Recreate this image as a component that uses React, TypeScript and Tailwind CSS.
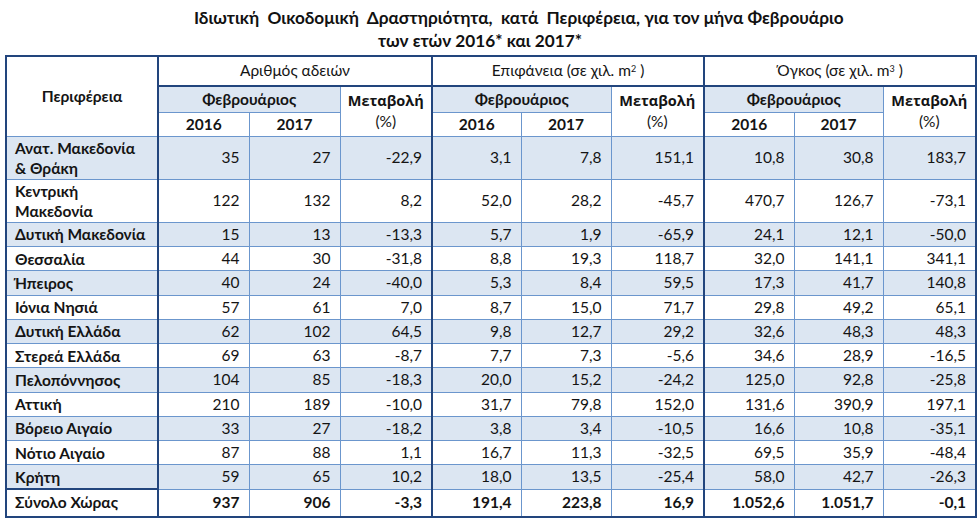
import type { ReactNode } from "react"

const rows: string[][] = [
  ["Ανατ. Μακεδονία|& Θράκη", "35", "27", "-22,9", "3,1", "7,8", "151,1", "10,8", "30,8", "183,7"],
  ["Κεντρική|Μακεδονία", "122", "132", "8,2", "52,0", "28,2", "-45,7", "470,7", "126,7", "-73,1"],
  ["Δυτική Μακεδονία", "15", "13", "-13,3", "5,7", "1,9", "-65,9", "24,1", "12,1", "-50,0"],
  ["Θεσσαλία", "44", "30", "-31,8", "8,8", "19,3", "118,7", "32,0", "141,1", "341,1"],
  ["Ήπειρος", "40", "24", "-40,0", "5,3", "8,4", "59,5", "17,3", "41,7", "140,8"],
  ["Ιόνια Νησιά", "57", "61", "7,0", "8,7", "15,0", "71,7", "29,8", "49,2", "65,1"],
  ["Δυτική Ελλάδα", "62", "102", "64,5", "9,8", "12,7", "29,2", "32,6", "48,3", "48,3"],
  ["Στερεά Ελλάδα", "69", "63", "-8,7", "7,7", "7,3", "-5,6", "34,6", "28,9", "-16,5"],
  ["Πελοπόννησος", "104", "85", "-18,3", "20,0", "15,2", "-24,2", "125,0", "92,8", "-25,8"],
  ["Αττική", "210", "189", "-10,0", "31,7", "79,8", "152,0", "131,6", "390,9", "197,1"],
  ["Βόρειο Αιγαίο", "33", "27", "-18,2", "3,8", "3,4", "-10,5", "16,6", "10,8", "-35,1"],
  ["Νότιο Αιγαίο", "87", "88", "1,1", "16,7", "11,3", "-32,5", "69,5", "35,9", "-48,4"],
  ["Κρήτη", "59", "65", "10,2", "18,0", "13,5", "-25,4", "58,0", "42,7", "-26,3"],
]

const total = ["Σύνολο Χώρας", "937", "906", "-3,3", "191,4", "223,8", "16,9", "1.052,6", "1.051,7", "-0,1"]

// columns that start a group get the heavy left rule
const groupStart = [1, 4, 7]

function Num({ i, children, bold }: { i: number; children: ReactNode; bold?: boolean }) {
  return (
    <td
      className={
        "border border-[#6b96cd] pr-[9px] text-right align-middle " +
        (groupStart.includes(i) ? "border-l-2 border-l-[#22457d] " : "") +
        (bold ? "font-bold" : "")
      }
    >
      {children}
    </td>
  )
}

function Change() {
  return (
    <th rowSpan={2} className="border border-[#6b96cd] bg-white text-center align-middle leading-[21px]">
      <span className="font-['Open_Sans'] text-[14.5px] font-bold">Μεταβολή</span>
      <br />
      <span className="font-normal">(%)</span>
    </th>
  )
}

function Group({ children }: { children: ReactNode }) {
  return (
    <th
      colSpan={3}
      className="h-[30px] border border-l-2 border-b-2 border-[#6b96cd] border-l-[#22457d] border-b-[#22457d] bg-white text-center font-normal"
    >
      {children}
    </th>
  )
}

function Month() {
  return (
    <th colSpan={2} className="border border-l-2 border-[#6b96cd] border-l-[#22457d] bg-[#dce6f2] font-bold">
      Φεβρουάριος
    </th>
  )
}

export default function App() {
  return (
    <div className="h-[521px] w-[980px] overflow-hidden bg-white font-['Lato','Open_Sans',sans-serif] text-[15.5px] text-[#141414]">
      <div className="pt-[6px] text-[17.2px] font-bold leading-[23px] text-[#111]">
        <div className="pl-[194px]">
          Ιδιωτική&nbsp; Οικοδομική&nbsp; Δραστηριότητα,&nbsp; κατά&nbsp; Περιφέρεια, για τον μήνα Φεβρουάριο
        </div>
        <div className="pl-[378px]">των ετών 2016* και 2017*</div>
      </div>

      <table className="ml-[5px] mt-[3px] w-[970px] table-fixed border-collapse border-2 border-[#22457d]">
        <colgroup>
          <col className="w-[152px]" />
          <col className="w-[91px]" />
          <col className="w-[91px]" />
          <col className="w-[92px]" />
          <col className="w-[89px]" />
          <col className="w-[90px]" />
          <col className="w-[93px]" />
          <col className="w-[90px]" />
          <col className="w-[89px]" />
          <col className="w-[93px]" />
        </colgroup>
        <thead>
          <tr>
            <th rowSpan={3} className="border border-[#6b96cd] bg-white text-center font-bold">
              Περιφέρεια
            </th>
            <Group>Αριθμός αδειών</Group>
            <Group>
              Επιφάνεια (σε χιλ. m<sup className="text-[9px]">2</sup> )
            </Group>
            <Group>
              Όγκος (σε χιλ. m<sup className="text-[9px]">3</sup> )
            </Group>
          </tr>
          <tr className="h-[26px]">
            <Month />
            <Change />
            <Month />
            <Change />
            <Month />
            <Change />
          </tr>
          <tr className="h-[24px]">
            <th className="border border-l-2 border-[#6b96cd] border-l-[#22457d] font-bold">2016</th>
            <th className="border border-[#6b96cd] font-bold">2017</th>
            <th className="border border-l-2 border-[#6b96cd] border-l-[#22457d] font-bold">2016</th>
            <th className="border border-[#6b96cd] font-bold">2017</th>
            <th className="border border-l-2 border-[#6b96cd] border-l-[#22457d] font-bold">2016</th>
            <th className="border border-[#6b96cd] font-bold">2017</th>
          </tr>
        </thead>
        <tbody>
          {rows.map((r, ri) => {
            const [a, b] = r[0].split("|")
            const tall = b !== undefined
            return (
              <tr
                key={ri}
                className={(ri % 2 === 0 ? "bg-[#dce6f2] " : "bg-white ") + (tall ? "h-[43px]" : "h-[24px]")}
              >
                <td className="border border-[#6b96cd] pl-[8px] align-middle font-bold leading-[20px]">
                  {a}
                  {tall && <br />}
                  {b}
                </td>
                {r.slice(1).map((v, i) => (
                  <Num key={i} i={i + 1}>
                    {v}
                  </Num>
                ))}
              </tr>
            )
          })}
          <tr className="h-[28px] bg-white">
            <td className="border border-[#6b96cd] border-t-2 border-t-[#22457d] pl-[8px] font-bold">{total[0]}</td>
            {total.slice(1).map((v, i) => (
              <Num key={i} i={i + 1} bold>
                {v}
              </Num>
            ))}
          </tr>
        </tbody>
      </table>
    </div>
  )
}
